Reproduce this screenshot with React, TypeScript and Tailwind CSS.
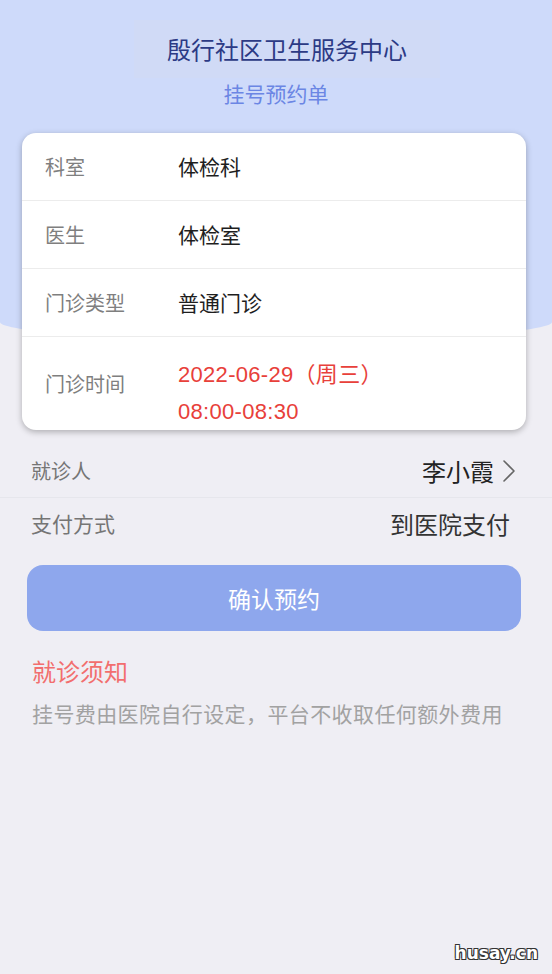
const font = "font-['Noto_Sans_CJK_SC','Noto_Sans',sans-serif]"

const cardRows = [
  { label: '科室', value: '体检科' },
  { label: '医生', value: '体检室' },
  { label: '门诊类型', value: '普通门诊' },
]

function ChevronRight() {
  return (
    <svg width="14" height="24" viewBox="0 0 14 24" fill="none" className="ml-[8px]">
      <path d="M2 2l10 10L2 22" stroke="#666" strokeWidth="1.6" strokeLinecap="round" strokeLinejoin="round" />
    </svg>
  )
}

export default function App() {
  return (
    <div className={`relative min-h-[974px] w-full overflow-hidden bg-[#efeef4] ${font}`}>
      {/* blue header backdrop */}
      <div className="absolute left-0 top-0 h-[340px] w-full rounded-b-[50%_18px] bg-[#cedafa]" />

      <div className="relative">
        {/* ── header ── */}
        <div className="flex flex-col items-center pt-[20px]">
          <div className="ml-[22px] flex h-[58px] w-[306px] items-center justify-center bg-[#d0daf6]">
            <span className="text-[24px] leading-none text-[#2c3a85]">殷行社区卫生服务中心</span>
          </div>
          <p className="mt-[5px] text-[21px] leading-none text-[#6b86e4]">挂号预约单</p>
        </div>

        {/* ── card ── */}
        <div className="ml-[22px] mr-[26px] mt-[29px] overflow-hidden rounded-[14px] bg-white shadow-[0_2px_6px_rgba(0,0,0,0.28)]">
          {cardRows.map((row) => (
            <div key={row.label} className="flex h-[68px] items-center border-b border-[#ececec] pl-[23px]">
              <span className="w-[133px] text-[20px] text-[#7f7f7f]">{row.label}</span>
              <span className="text-[21px] text-[#1e1e1e]">{row.value}</span>
            </div>
          ))}
          <div className="flex h-[93px] items-center pl-[23px]">
            <span className="w-[133px] text-[20px] text-[#7f7f7f]">门诊时间</span>
            <div className="flex flex-col gap-[7px] pt-[20px] font-['Liberation_Sans','Noto_Sans_CJK_SC',sans-serif] text-[22px] leading-[30px] tracking-[0.3px] text-[#e8403a]">
              <span>2022-06-29（周三）</span>
              <span>08:00-08:30</span>
            </div>
          </div>
        </div>

        {/* ── patient / payment ── */}
        <div className="mt-[14px]">
          <div className="flex h-[54px] items-center justify-between border-b border-[#e6e6ec] pl-[31px] pr-[36px]">
            <span className="text-[20px] text-[#757575]">就诊人</span>
            <span className="flex items-center text-[24px] text-[#222]">
              李小霞
              <ChevronRight />
            </span>
          </div>
          <div className="flex h-[51px] items-center justify-between pl-[31px] pr-[42px]">
            <span className="text-[21px] text-[#757575]">支付方式</span>
            <span className="text-[24px] text-[#333]">到医院支付</span>
          </div>
        </div>

        {/* ── button ── */}
        <div className="mt-[16px] pl-[27px] pr-[31px]">
          <button className="flex h-[66px] w-full items-center justify-center rounded-[16px] bg-[#8ea7ed] text-[23px] text-white">
            确认预约
          </button>
        </div>

        {/* ── notice ── */}
        <div className="mt-[22px] px-[32px]">
          <p className="text-[24px] leading-[36px] text-[#f26e6e]">就诊须知</p>
          <p className="mt-[8px] whitespace-nowrap text-[21px] leading-[32px] tracking-[0.4px] text-[#a2a2a2]">挂号费由医院自行设定，平台不收取任何额外费用</p>
        </div>
      </div>

      {/* watermark */}
      <span className="absolute bottom-[8px] right-[14px] font-['DejaVu_Sans',sans-serif] text-[17px] font-bold text-white [text-shadow:1px_1px_0_#333,-1px_-1px_0_#333,1px_-1px_0_#333,-1px_1px_0_#333]">
        husay.cn
      </span>
    </div>
  )
}
